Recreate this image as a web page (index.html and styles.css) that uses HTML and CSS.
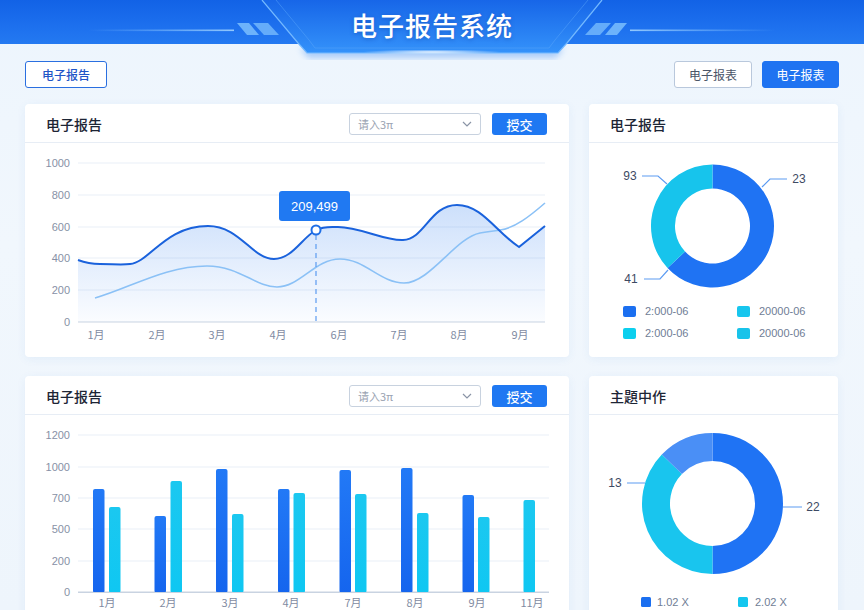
FILE: index.html
```html
<!DOCTYPE html>
<html lang="zh">
<head>
<meta charset="utf-8">
<title>电子报告系统</title>
<link rel="stylesheet" href="styles.css">
</head>
<body>
<header class="topbar">
  <svg class="topbar-deco" width="864" height="60" viewBox="0 0 864 60">
    <defs>
      <linearGradient id="trap" x1="0" y1="0" x2="0" y2="1">
        <stop offset="0" stop-color="#1766e8"/>
        <stop offset="1" stop-color="#3492fa"/>
      </linearGradient>
      <linearGradient id="lineL" x1="0" y1="0" x2="1" y2="0">
        <stop offset="0" stop-color="#8cc8ff" stop-opacity="0"/>
        <stop offset="1" stop-color="#9fd2ff" stop-opacity="0.9"/>
      </linearGradient>
      <linearGradient id="lineR" x1="1" y1="0" x2="0" y2="0">
        <stop offset="0" stop-color="#8cc8ff" stop-opacity="0"/>
        <stop offset="1" stop-color="#9fd2ff" stop-opacity="0.9"/>
      </linearGradient>
      <radialGradient id="glow" cx="0.5" cy="0.5" r="0.5">
        <stop offset="0" stop-color="#ffffff" stop-opacity="0.9"/>
        <stop offset="1" stop-color="#ffffff" stop-opacity="0"/>
      </radialGradient>
      <filter id="sh" x="-20%" y="-50%" width="140%" height="200%">
        <feGaussianBlur stdDeviation="3"/>
      </filter>
    </defs>
    <polygon points="300,48 564,48 556,58 308,58" fill="#2a7ff0" opacity="0.35" filter="url(#sh)"/>
    <polygon points="262,0 602,0 567,43 558,53 307,53 298,43" fill="url(#trap)"/>
    <polyline points="262,0 298,43 307,53 558,53 567,43 602,0" fill="none" stroke="#74b9ff" stroke-width="1.2"/>
    <polyline points="276,0 309,40 315,48 549,48 555,40 588,0" fill="none" stroke="#5aa6fb" stroke-width="0.8" opacity="0.6"/>
    <ellipse cx="432" cy="52" rx="70" ry="2.5" fill="url(#glow)"/>
    <rect x="88" y="29.5" width="146" height="1.6" fill="url(#lineL)"/>
    <rect x="630" y="29.5" width="146" height="1.6" fill="url(#lineR)"/>
    <polygon points="237,23 249,23 259,35 247,35" fill="#6db3fb"/>
    <polygon points="253,23 268,23 279,35 264,35" fill="#6db3fb" opacity="0.9"/>
    <polygon points="627,23 615,23 605,35 617,35" fill="#6db3fb"/>
    <polygon points="611,23 596,23 585,35 600,35" fill="#6db3fb" opacity="0.9"/>
  </svg>
  <h1 class="topbar-title">电子报告系统</h1>
</header>

<div class="toolbar">
  <button class="btn btn-outline">电子报告</button>
  <div class="toolbar-right">
    <button class="btn btn-plain">电子报表</button>
    <button class="btn btn-solid">电子报表</button>
  </div>
</div>

<main class="grid">
  <section class="card">
    <div class="card-head">
      <h2 class="card-title">电子报告</h2>
      <div class="card-tools">
        <div class="select"><span>请入3π</span>
          <svg width="10" height="6" viewBox="0 0 10 6"><path d="M1 1 L5 5 L9 1" fill="none" stroke="#8a94a6" stroke-width="1.2"/></svg>
        </div>
        <button class="btn-submit">授交</button>
      </div>
    </div>
    <svg class="chart" width="544" height="214" viewBox="25 143 544 214">
      <defs>
        <linearGradient id="area" x1="0" y1="0" x2="0" y2="1">
          <stop offset="0" stop-color="#2d7cf0" stop-opacity="0.24"/>
          <stop offset="1" stop-color="#2d7cf0" stop-opacity="0.02"/>
        </linearGradient>
      </defs>
      <g class="grid-lines">
        <line x1="78" y1="163" x2="545" y2="163"/>
        <line x1="78" y1="195" x2="545" y2="195"/>
        <line x1="78" y1="227" x2="545" y2="227"/>
        <line x1="78" y1="258" x2="545" y2="258"/>
        <line x1="78" y1="290" x2="545" y2="290"/>
      </g>
      <line class="axis" x1="78" y1="322" x2="545" y2="322"/>
      <g class="ylab">
        <text x="70" y="167">1000</text>
        <text x="70" y="199">800</text>
        <text x="70" y="231">600</text>
        <text x="70" y="262">400</text>
        <text x="70" y="294">200</text>
        <text x="70" y="326">0</text>
      </g>
      <g class="xlab">
        <text x="96" y="339">1月</text>
        <text x="157" y="339">2月</text>
        <text x="217" y="339">3月</text>
        <text x="278" y="339">4月</text>
        <text x="339" y="339">6月</text>
        <text x="399" y="339">7月</text>
        <text x="459" y="339">8月</text>
        <text x="520" y="339">9月</text>
      </g>
      <path d="M78,260 C86,263 92,264 100,264 C112,264 122,265 130,264 C150,262 165,226 208,226 C240,226 252,259 274,259 C292,259 302,238 316,230 C324,226 330,227 338,227 C360,227 385,241 403,240 C425,239 430,205 457,205 C482,205 496,232 519,247 L545,226 L545,322 L78,322 Z" fill="url(#area)"/>
      <path d="M95,298 C130,288 165,266 207,266 C240,266 255,287 277,287 C300,287 315,259 340,259 C365,259 380,283 404,283 C430,283 455,238 480,233 C490,231 495,231 500,230 C515,228 530,216 545,203" fill="none" stroke="#8bc1f6" stroke-width="1.6"/>
      <path d="M78,260 C86,263 92,264 100,264 C112,264 122,265 130,264 C150,262 165,226 208,226 C240,226 252,259 274,259 C292,259 302,238 316,230 C324,226 330,227 338,227 C360,227 385,241 403,240 C425,239 430,205 457,205 C482,205 496,232 519,247 L545,226" fill="none" stroke="#1a62dc" stroke-width="2"/>
      <line x1="316" y1="235" x2="316" y2="322" stroke="#5b9bf0" stroke-width="1.2" stroke-dasharray="5 4"/>
      <rect x="279" y="191" width="71" height="30" rx="3" fill="#2079f2"/>
      <text class="tip" x="314.5" y="211">209,499</text>
      <circle cx="316" cy="230" r="4.5" fill="#ffffff" stroke="#1f6fe6" stroke-width="2"/>
    </svg>
  </section>

  <section class="card">
    <div class="card-head">
      <h2 class="card-title">电子报告</h2>
    </div>
    <svg class="chart" width="249" height="214" viewBox="589 143 249 214">
      <path d="M712.5,164.5 A61.5,61.5 0 1 1 667.52,267.94 L685.07,251.58 A37.5,37.5 0 1 0 712.5,188.5 Z" fill="#1f73f3"/>
      <path d="M667.52,267.94 A61.5,61.5 0 0 1 712.5,164.5 L712.5,188.5 A37.5,37.5 0 0 0 685.07,251.58 Z" fill="#17c4ec"/>
      <polyline points="642,176 658,176 667,184" class="leader"/>
      <polyline points="762,187 770,179 787,179" class="leader"/>
      <polyline points="644,279 660,279 668,270" class="leader"/>
      <text class="dlab" x="630" y="180" text-anchor="middle">93</text>
      <text class="dlab" x="799" y="183" text-anchor="middle">23</text>
      <text class="dlab" x="631" y="283" text-anchor="middle">41</text>
      <rect x="623" y="306" width="13" height="11" rx="2" fill="#1b6ff0"/>
      <text class="leg" x="645" y="315">2:000-06</text>
      <rect x="737" y="306" width="13" height="11" rx="2" fill="#17c6ee"/>
      <text class="leg" x="759" y="315">20000-06</text>
      <rect x="623" y="328" width="13" height="11" rx="2" fill="#0ccfee"/>
      <text class="leg" x="645" y="337">2:000-06</text>
      <rect x="737" y="328" width="13" height="11" rx="2" fill="#18c3ea"/>
      <text class="leg" x="759" y="337">20000-06</text>
    </svg>
  </section>

  <section class="card">
    <div class="card-head">
      <h2 class="card-title">电子报告</h2>
      <div class="card-tools">
        <div class="select"><span>请入3π</span>
          <svg width="10" height="6" viewBox="0 0 10 6"><path d="M1 1 L5 5 L9 1" fill="none" stroke="#8a94a6" stroke-width="1.2"/></svg>
        </div>
        <button class="btn-submit">授交</button>
      </div>
    </div>
    <svg class="chart" width="544" height="220" viewBox="25 415 544 220">
      <defs>
        <linearGradient id="barB" x1="0" y1="0" x2="0" y2="1">
          <stop offset="0" stop-color="#2279f6"/>
          <stop offset="1" stop-color="#1565ee"/>
        </linearGradient>
        <linearGradient id="barC" x1="0" y1="0" x2="0" y2="1">
          <stop offset="0" stop-color="#1bc8f0"/>
          <stop offset="1" stop-color="#0fc7f2"/>
        </linearGradient>
      </defs>
      <g class="grid-lines">
        <line x1="78" y1="435" x2="549" y2="435"/>
        <line x1="78" y1="467" x2="549" y2="467"/>
        <line x1="78" y1="498" x2="549" y2="498"/>
        <line x1="78" y1="529" x2="549" y2="529"/>
        <line x1="78" y1="561" x2="549" y2="561"/>
      </g>
      <line class="axis" x1="78" y1="592" x2="549" y2="592"/>
      <g class="ylab">
        <text x="70" y="439">1200</text>
        <text x="70" y="471">1000</text>
        <text x="70" y="502">700</text>
        <text x="70" y="533">500</text>
        <text x="70" y="565">200</text>
        <text x="70" y="596">0</text>
      </g>
      <g fill="url(#barB)">
        <rect x="93" y="489" width="11.5" height="104" rx="2"/>
        <rect x="154.5" y="516" width="11.5" height="77" rx="2"/>
        <rect x="216" y="469" width="11.5" height="124" rx="2"/>
        <rect x="278" y="489" width="11.5" height="104" rx="2"/>
        <rect x="339.5" y="470" width="11.5" height="123" rx="2"/>
        <rect x="401" y="468" width="11.5" height="125" rx="2"/>
        <rect x="462.5" y="495" width="11.5" height="98" rx="2"/>
      </g>
      <g fill="url(#barC)">
        <rect x="109" y="507" width="11.5" height="86" rx="2"/>
        <rect x="170.5" y="481" width="11.5" height="112" rx="2"/>
        <rect x="232" y="514" width="11.5" height="79" rx="2"/>
        <rect x="293.5" y="493" width="11.5" height="100" rx="2"/>
        <rect x="355" y="494" width="11.5" height="99" rx="2"/>
        <rect x="417" y="513" width="11.5" height="80" rx="2"/>
        <rect x="478" y="517" width="11.5" height="76" rx="2"/>
        <rect x="523.5" y="500" width="11.5" height="93" rx="2"/>
      </g>
      <line class="axis" x1="78" y1="592.5" x2="549" y2="592.5"/>
      <g class="xlab">
        <text x="107" y="607">1月</text>
        <text x="168" y="607">2月</text>
        <text x="230" y="607">3月</text>
        <text x="291" y="607">4月</text>
        <text x="353" y="607">7月</text>
        <text x="415" y="607">8月</text>
        <text x="477" y="607">9月</text>
        <text x="532" y="607">11月</text>
      </g>
    </svg>
  </section>

  <section class="card">
    <div class="card-head">
      <h2 class="card-title card-title-tc">主題中作</h2>
    </div>
    <svg class="chart" width="249" height="220" viewBox="589 415 249 220">
      <path d="M712.5,433 A70.5,70.5 0 0 1 712.5,574 L712.5,546 A42.5,42.5 0 0 0 712.5,461 Z" fill="#1f73f4"/>
      <path d="M712.5,574 A70.5,70.5 0 0 1 661.79,454.52 L681.93,473.98 A42.5,42.5 0 0 0 712.5,546 Z" fill="#19c5ee"/>
      <path d="M661.79,454.52 A70.5,70.5 0 0 1 712.5,433 L712.5,461 A42.5,42.5 0 0 0 681.93,473.98 Z" fill="#4a8ff6"/>
      <line class="leader" x1="627" y1="483" x2="645" y2="483"/>
      <line class="leader" x1="783" y1="507" x2="802" y2="507"/>
      <text class="dlab" x="615" y="487" text-anchor="middle">13</text>
      <text class="dlab" x="813" y="511" text-anchor="middle">22</text>
      <rect x="641" y="597" width="10" height="10" rx="1.5" fill="#1b6ff0"/>
      <text class="leg" x="657" y="606">1.02 X</text>
      <rect x="738" y="597" width="10" height="10" rx="1.5" fill="#14c6ee"/>
      <text class="leg" x="755" y="606">2.02 X</text>
    </svg>
  </section>
</main>
</body>
</html>
```

FILE: styles.css
```css
* { box-sizing: border-box; }
html, body { margin: 0; padding: 0; }
body {
  width: 864px;
  height: 610px;
  overflow: hidden;
  background: linear-gradient(180deg, #edf5fd 0%, #f1f7fd 40%, #eef5fc 100%);
  font-family: "Noto Sans", "Noto Sans CJK SC", sans-serif;
  color: #1f2a3d;
}

.topbar {
  position: relative;
  height: 44px;
  background: linear-gradient(180deg, #1262e6 0%, #1d70ee 60%, #2479f1 100%);
  display: flex;
  justify-content: center;
  align-items: center;
}
.topbar-deco {
  position: absolute;
  left: 0;
  top: 0;
  z-index: 1;
}
.topbar-title {
  position: relative;
  z-index: 2;
  margin: 0;
  font-family: "Noto Sans CJK SC", sans-serif;
  font-size: 26px;
  font-weight: 500;
  color: #ffffff;
  letter-spacing: 1px;
  text-shadow: 0 1px 4px rgba(0, 40, 140, 0.35);
  line-height: 44px;
  margin-top: 5px;
}

.toolbar {
  display: flex;
  justify-content: space-between;
  align-items: center;
  height: 88px;
  margin-top: -44px;
  padding: 61px 25px 0 25px;
}
.toolbar-right { display: flex; gap: 10px; }
.btn {
  height: 27px;
  border-radius: 3px;
  font-family: "Noto Sans CJK SC", sans-serif;
  font-size: 12px;
  padding: 0;
  cursor: pointer;
}
.btn-outline {
  width: 82px;
  background: #ffffff;
  border: 1px solid #2a6fe0;
  color: #1f56c7;
  font-weight: 500;
}
.btn-plain {
  width: 78px;
  background: #ffffff;
  border: 1px solid #b9c8dc;
  color: #4b5568;
}
.btn-solid {
  width: 77px;
  background: #1f73f1;
  border: 1px solid #1f73f1;
  color: #ffffff;
}

.grid {
  display: grid;
  grid-template-columns: 544px 249px;
  grid-template-rows: 253px 260px;
  column-gap: 20px;
  row-gap: 19px;
  padding: 16px 0 0 25px;
}
.card {
  background: #ffffff;
  border-radius: 4px;
  box-shadow: 0 2px 10px rgba(40, 110, 200, 0.07);
  overflow: hidden;
  display: flex;
  flex-direction: column;
}
.card-head {
  height: 39px;
  flex: 0 0 39px;
  border-bottom: 1px solid #e7edf5;
  display: flex;
  justify-content: space-between;
  align-items: center;
  padding: 2px 22px 0 21px;
}
.card-title {
  margin: 0;
  font-family: "Noto Sans CJK SC", sans-serif;
  font-size: 14px;
  font-weight: 500;
  color: #1d2535;
}
.card-title-tc {
  font-family: "Noto Sans CJK TC", "Noto Sans CJK SC", sans-serif;
}
.card-tools { display: flex; align-items: center; gap: 11px; }
.select {
  width: 132px;
  height: 22px;
  border: 1px solid #c8d2df;
  border-radius: 3px;
  display: flex;
  justify-content: space-between;
  align-items: center;
  padding: 0 8px 0 8px;
  font-family: "Noto Sans CJK SC", sans-serif;
  font-size: 11px;
  color: #9aa3b2;
}
.btn-submit {
  width: 55px;
  height: 22px;
  border: none;
  border-radius: 3px;
  background: #1f78f2;
  color: #ffffff;
  font-family: "Noto Sans CJK SC", sans-serif;
  font-size: 13px;
  font-weight: 500;
  padding: 0;
}

.chart { display: block; }
.grid-lines line { stroke: #e9eff7; stroke-width: 1; }
.axis { stroke: #c9d3e1; stroke-width: 1; }
.ylab text {
  font-family: "Liberation Sans", "Noto Sans", sans-serif;
  font-size: 11px;
  fill: #8791a6;
  text-anchor: end;
}
.xlab text {
  font-family: "Noto Sans CJK SC", sans-serif;
  font-size: 11px;
  fill: #7f8ba2;
  text-anchor: middle;
}
.tip {
  font-family: "Liberation Sans", sans-serif;
  font-size: 13px;
  fill: #ffffff;
  text-anchor: middle;
}
.leader { fill: none; stroke: #5d9cf2; stroke-width: 1.2; }
.dlab {
  font-family: "Liberation Sans", sans-serif;
  font-size: 12px;
  fill: #3d4a63;
}
.leg {
  font-family: "Liberation Sans", sans-serif;
  font-size: 11px;
  fill: #6f7d95;
}
```
